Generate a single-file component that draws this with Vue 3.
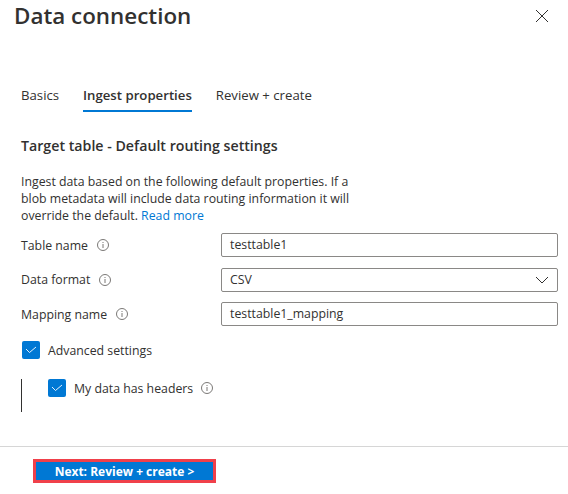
<script setup>
const tabs = [
  { label: 'Basics', active: false },
  { label: 'Ingest properties', active: true },
  { label: 'Review + create', active: false }
]
</script>

<template>
  <div class="blade">
    <header class="blade-head">
      <h1>Data connection</h1>
      <svg class="close" width="14" height="14" viewBox="0 0 14 14">
        <path d="M1 1L13 13M13 1L1 13" stroke="#323130" stroke-width="1" fill="none" />
      </svg>
    </header>

    <nav class="tabs">
      <span v-for="tab in tabs" :key="tab.label" class="tab" :class="{ active: tab.active }">{{ tab.label }}</span>
    </nav>

    <main class="content">
      <h2>Target table - Default routing settings</h2>
      <p class="intro">
        Ingest data based on the following default properties. If a<br />
        blob metadata will include data routing information it will<br />
        override the default. <a>Read more</a>
      </p>

      <div class="form-row">
        <label>Table name <svg class="info" viewBox="0 0 12 12"><circle cx="6" cy="6" r="5.5" /><path d="M6 5v4M6 3v1" /></svg></label>
        <div class="field">testtable1</div>
      </div>
      <div class="form-row">
        <label>Data format <svg class="info" viewBox="0 0 12 12"><circle cx="6" cy="6" r="5.5" /><path d="M6 5v4M6 3v1" /></svg></label>
        <div class="field select">
          CSV
          <svg width="14" height="8" viewBox="0 0 14 8"><path d="M1 1l6 6 6-6" stroke="#323130" fill="none" /></svg>
        </div>
      </div>
      <div class="form-row">
        <label>Mapping name <svg class="info" viewBox="0 0 12 12"><circle cx="6" cy="6" r="5.5" /><path d="M6 5v4M6 3v1" /></svg></label>
        <div class="field">testtable1_mapping</div>
      </div>

      <div class="check-row outer">
        <span class="check"><svg width="12" height="10" viewBox="0 0 12 10"><path d="M1 4l3.5 3.5L11 2" stroke="#fff" stroke-width="0.9" fill="none" /></svg></span>
        Advanced settings
      </div>

      <div class="nested">
        <div class="check-row inner">
          <span class="check"><svg width="12" height="10" viewBox="0 0 12 10"><path d="M1 4l3.5 3.5L11 2" stroke="#fff" stroke-width="0.9" fill="none" /></svg></span>
          My data has headers
          <svg class="info" viewBox="0 0 12 12"><circle cx="6" cy="6" r="5.5" /><path d="M6 5v4M6 3v1" /></svg>
        </div>
      </div>
    </main>

    <footer class="blade-foot">
      <button type="button">Next: Review + create &gt;</button>
    </footer>
  </div>
</template>

<style scoped>
.blade {
  width: 568px;
  height: 494px;
  background: #fff;
  color: #323130;
  font-family: "Open Sans", "Noto Sans", sans-serif;
  font-size: 12.3px;
  display: flex;
  flex-direction: column;
  overflow: hidden;
}

.blade-head {
  display: flex;
  justify-content: space-between;
  align-items: center;
  height: 32px;
  padding: 0 19px 0 14px;
}

.blade-head h1 {
  margin: 0 0 2px;
  font-size: 22.4px;
  font-weight: 600;
  color: #323130;
}

.tabs {
  display: flex;
  gap: 24px;
  margin-top: 49px;
  padding-left: 21px;
  height: 31px;
}

.tab {
  height: 29px;
  line-height: 29px;
  font-size: 13.2px;
}

.tab.active {
  font-weight: 600;
  border-bottom: 2px solid #0078d4;
}

.content {
  flex: 1;
  padding: 25px 10px 0 21px;
}

h2 {
  margin: 0;
  font-size: 14.2px;
  line-height: 18px;
  font-weight: 600;
}

.intro {
  margin: 18px 0 0;
  line-height: 17px;
  font-size: 12.3px;
}

.intro a {
  color: #0078d4;
}

.form-row {
  display: flex;
  align-items: center;
  margin-top: 10.5px;
  height: 24px;
}

.intro + .form-row {
  margin-top: 9px;
}

.form-row label {
  width: 200px;
  display: flex;
  align-items: center;
  gap: 9px;
}

.field {
  flex: 1;
  height: 24px;
  box-sizing: border-box;
  border: 1px solid #8a8886;
  border-radius: 2px;
  padding: 0 8px;
  line-height: 22px;
  display: flex;
  align-items: center;
  justify-content: space-between;
}

.info {
  width: 12px;
  height: 12px;
  fill: none;
  stroke: #7a7876;
  stroke-width: 1;
}

.check-row {
  display: flex;
  align-items: center;
  gap: 9px;
  margin-top: 15px;
  height: 18px;
}

.outer {
  padding-left: 1px;
  gap: 8px;
}

.check {
  width: 18px;
  height: 18px;
  border-radius: 2px;
  background: #0078d4;
  display: flex;
  align-items: center;
  justify-content: center;
}

.nested {
  margin-top: 20px;
  border-left: 1px solid #323130;
  height: 33px;
  padding-left: 26px;
}

.inner {
  margin-top: 0;
  gap: 8px;
}

.blade-foot {
  border-top: 1px solid #d6d6d6;
  height: 48px;
  box-sizing: border-box;
  padding: 12px 0 0 33px;
}

.blade-foot button {
  width: 183px;
  height: 24px;
  background: #0078d4;
  border: 3px solid #f0404a;
  color: #fff;
  font-family: inherit;
  font-size: 12px;
  font-weight: 700;
  padding: 0;
}
</style>

<style>
body { background: #fff; }
</style>
